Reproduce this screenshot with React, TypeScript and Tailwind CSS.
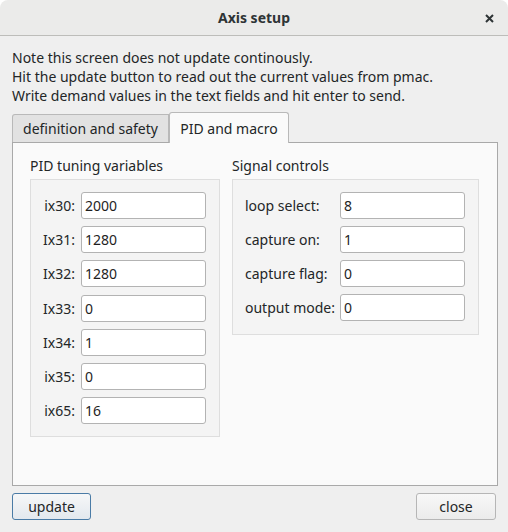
import React from 'react'

const pidRows = [
    { label: 'ix30:', value: '2000' },
    { label: 'Ix31:', value: '1280' },
    { label: 'Ix32:', value: '1280' },
    { label: 'Ix33:', value: '0' },
    { label: 'Ix34:', value: '1' },
    { label: 'ix35:', value: '0' },
    { label: 'ix65:', value: '16' },
]

const signalRows = [
    { label: 'loop select:', value: '8' },
    { label: 'capture on:', value: '1' },
    { label: 'capture flag:', value: '0' },
    { label: 'output mode:', value: '0' },
]

function Field({ value }: { value: string }) {
    return (
        <input
            defaultValue={value}
            className="w-[125px] h-[27px] px-[3px] bg-white border border-[#b3b3b3] rounded-[3px] text-[14px] text-[#1e1e1e] outline-none"
        />
    )
}

export default function App() {
    return (
        <div
            className="w-[508px] h-[532px] bg-white flex flex-col text-[#232627] text-[14px]"
            style={{ fontFamily: '"Noto Sans", "Open Sans", sans-serif' }}
        >
            <div className="relative h-[36px] shrink-0 rounded-t-[8px] bg-[#ebebea] border-b border-[#bdbdba] flex items-center justify-center">
                <span className="font-bold text-[14px] text-[#2e3436]">Axis setup</span>
                <svg className="absolute right-[14px] top-[14px]" width="9" height="9" viewBox="0 0 9 9">
                    <path d="M1 1 L8 8 M8 1 L1 8" stroke="#2e3436" strokeWidth="2" />
                </svg>
            </div>

            <div className="flex-1 bg-[#efefef] px-[12px] pt-[12px] flex flex-col">
                <div className="leading-[19px]">
                    <p>Note this screen does not update continously.</p>
                    <p>Hit the update button to read out the current values from pmac.</p>
                    <p>Write demand values in the text fields and hit enter to send.</p>
                </div>

                <div className="mt-[7px] flex items-end h-[30px]">
                    <div className="w-[157px] h-[28px] bg-[#e2e2e2] border border-b-0 border-[#b9b9b9] rounded-tl-[3px] flex items-center justify-center">
                        definition and safety
                    </div>
                    <div className="relative z-10 -mb-px w-[120px] h-[31px] bg-[#fafafa] border border-b-0 border-[#b9b9b9] rounded-t-[3px] flex items-center justify-center">
                        PID and macro
                    </div>
                </div>

                <div className="w-[486px] h-[344px] bg-[#fafafa] border border-[#a9a9a9] pl-[17px] pt-[13px] flex gap-[12px]">
                    <div className="flex flex-col">
                        <div className="h-[19px] leading-[19px] mb-[4px]">PID tuning variables</div>
                        <div className="w-[190px] h-[258px] bg-[#f4f4f4] border border-[#dedede] pl-[12px] pt-[12px] flex flex-col gap-[7.2px]">
                            {pidRows.map((row) => (
                                <div key={row.label} className="flex items-center">
                                    <span className="w-[32px] text-right mr-[6px]">{row.label}</span>
                                    <Field value={row.value} />
                                </div>
                            ))}
                        </div>
                    </div>
                    <div className="flex flex-col">
                        <div className="h-[19px] leading-[19px] mb-[4px]">Signal controls</div>
                        <div className="w-[247px] h-[156px] bg-[#f4f4f4] border border-[#dedede] pl-[12px] pt-[12px] flex flex-col gap-[7px]">
                            {signalRows.map((row) => (
                                <div key={row.label} className="flex items-center">
                                    <span className="w-[95px]">{row.label}</span>
                                    <Field value={row.value} />
                                </div>
                            ))}
                        </div>
                    </div>
                </div>

                <div className="mt-[7px] flex justify-between">
                    <button className="w-[79px] h-[27px] rounded-[3px] border border-[#4a7ba6] bg-gradient-to-b from-[#f6f7f8] to-[#e3e8ee] text-[14px]">
                        update
                    </button>
                    <button className="w-[80px] h-[27px] rounded-[3px] border border-[#b6b6b6] bg-gradient-to-b from-[#f8f8f8] to-[#ebebeb] text-[14px]">
                        close
                    </button>
                </div>
            </div>
        </div>
    )
}
